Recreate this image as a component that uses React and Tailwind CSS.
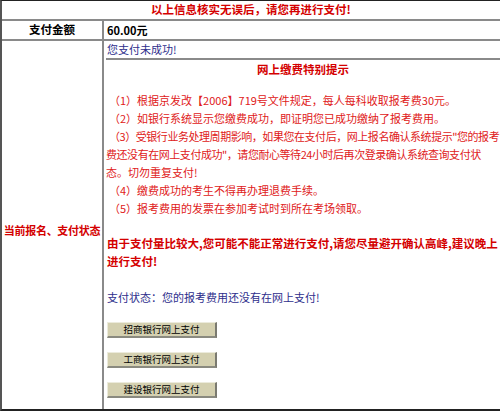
import React from 'react';

const font = { fontFamily: '"Noto Sans CJK SC", "Liberation Sans", sans-serif' };

const notes = [
  { text: '（1）根据京发改【2006】719号文件规定，每人每科收取报考费30元。', cls: 'pl-[3px]' },
  { text: '（2）如银行系统显示您缴费成功，即证明您已成功缴纳了报考费用。', cls: 'pl-[3px]' },
  { text: '（3）受银行业务处理周期影响，如果您在支付后，网上报名确认系统提示"您的报考', cls: 'pl-[3px] tracking-[-0.45px]' },
  { text: '费还没有在网上支付成功"，请您耐心等待24小时后再次登录确认系统查询支付状', cls: 'tracking-[-0.45px]' },
  { text: '态。切勿重复支付!', cls: '' },
  { text: '（4）缴费成功的考生不得再办理退费手续。', cls: 'pl-[3px]' },
  { text: '（5）报考费用的发票在参加考试时到所在考场领取。', cls: 'pl-[3px]' },
];

const banks = ['招商银行网上支付', '工商银行网上支付', '建设银行网上支付'];

export default function App() {
  return (
    <div className="w-[500px] h-[413px] overflow-hidden bg-white text-[11px] text-black" style={font}>
      <div className="h-[411px] border-t border-l-2 border-b-2 border-t-[#222] border-l-[#555] border-b-[#222] flex flex-col">
        {/* 标题行 */}
        <div className="h-[20px] flex items-center justify-center border-b-2 border-[#8a8a8a] font-bold text-[11.5px] text-[#d40000] leading-none">
          以上信息核实无误后，请您再进行支付!
        </div>

        {/* 支付金额 */}
        <div className="h-[20px] flex border-b-2 border-[#8a8a8a]">
          <div className="w-[102px] flex items-center justify-center font-bold text-[11.5px] border-r-2 border-[#8a8a8a]">
            支付金额
          </div>
          <div className="flex-1 flex items-center pl-[3px] font-bold">60.00元</div>
        </div>

        {/* 当前状态 */}
        <div className="flex-1 flex min-h-0">
          <div className="w-[102px] flex items-center justify-center pt-[10px] border-r-2 border-[#8a8a8a]">
            <span className="font-bold text-[11px] text-[#d40000] whitespace-nowrap tracking-[-0.3px]">当前报名、支付状态</span>
          </div>
          <div className="flex-1 min-w-0 overflow-hidden flex flex-col pl-[2px]">
            <div className="h-[19px] flex items-center pl-[1px] text-[#2e2e8c] border-b-2 border-[#8a8a8a]">
              您支付未成功!
            </div>
            <div className="flex flex-col text-[#e02020] whitespace-nowrap">
              <div className="leading-[18px] text-center font-bold text-[11.5px] text-[#d40000]">网上缴费特别提示</div>
              <div className="mt-[13px] flex flex-col">
                {notes.map((n) => (
                  <div key={n.text} className={`leading-[18px] ${n.cls}`}>
                    {n.text}
                  </div>
                ))}
              </div>
              <div className="mt-[17px] font-bold text-[11.5px] text-[#d40000] leading-[18px] pl-[1px]">
                <div>由于支付量比较大,您可能不能正常进行支付,请您尽量避开确认高峰,建议晚上</div>
                <div>进行支付!</div>
              </div>
            </div>
            <div className="mt-[18px] leading-[18px] pl-[1px] text-[#2e2e8c]">支付状态：您的报考费用还没有在网上支付!</div>
            <div className="mt-[16px] flex flex-col gap-[14px] pl-[1px]">
              {banks.map((b) => (
                <button
                  key={b}
                  className="w-[110px] h-[16px] flex items-center justify-center bg-[#d4d0b0] border-t border-l border-t-[#ecebdc] border-l-[#ecebdc] border-r-2 border-b-2 border-r-[#7a7a70] border-b-[#8a8a80] text-[9.5px] leading-none text-black"
                  style={font}
                >
                  {b}
                </button>
              ))}
            </div>
          </div>
        </div>
      </div>
    </div>
  );
}
